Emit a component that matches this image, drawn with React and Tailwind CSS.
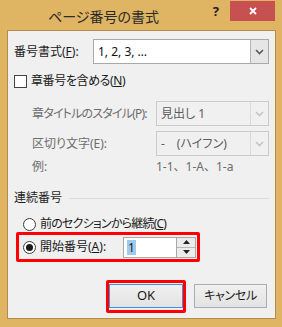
import React from 'react';

const Chevron = ({ color }) => (
  <svg width="9" height="6" viewBox="0 0 9 6">
    <polyline points="1,1 4.5,4.5 8,1" fill="none" stroke={color} strokeWidth="1.6" />
  </svg>
);

const Combo = ({ value, disabled, className }) => (
  <div
    className={`flex h-[25px] border ${
      disabled ? 'border-[#cacaca] bg-[#f0f0f0] text-[#5c5c5c]' : 'border-[#a9a9a9] bg-white text-[#111]'
    } ${className}`}
  >
    <div className="flex flex-1 items-center pl-[4px] whitespace-nowrap">{value}</div>
    <div
      className={`flex w-[18px] items-center justify-center border-l ${
        disabled ? 'border-[#dadada] bg-[#f0f0f0]' : 'border-[#b5b5b5] bg-[#e6e6e6]'
      }`}
    >
      <Chevron color={disabled ? '#c4c4c4' : '#5a5a5a'} />
    </div>
  </div>
);

const Radio = ({ checked }) => (
  <div className="flex h-[13px] w-[13px] shrink-0 items-center justify-center rounded-full border border-[#3c3c3c] bg-white">
    {checked && <div className="h-[7px] w-[7px] rounded-full bg-[#1a1a1a]" />}
  </div>
);

const Triangle = ({ up }) => (
  <svg width="7" height="4" viewBox="0 0 7 4">
    <polygon points={up ? '0,4 7,4 3.5,0' : '0,0 7,0 3.5,4'} fill="#222" />
  </svg>
);

export default function App() {
  return (
    <div className="h-[327px] w-[282px] bg-[#dfb463] font-['Noto_Sans','Noto_Sans_CJK_JP',sans-serif] text-[12px] text-[#1a1a1a] [font-feature-settings:'palt']">
      {/* title bar */}
      <div className="flex h-[30px] items-start">
        <span className="ml-[48px] mt-[7px] text-[14px] leading-[20px] text-[#2a2a2a]">ページ番号の書式</span>
        <span className="ml-auto mt-[3px] text-[13px] font-bold leading-[16px] text-[#222]">?</span>
        <div className="ml-[11px] mr-[7px] mt-[1px] flex h-[20px] w-[45px] items-center justify-center bg-[#c75050]">
          <svg width="8" height="8" viewBox="0 0 8 8">
            <path d="M1 1 L7 7 M7 1 L1 7" stroke="#fff" strokeWidth="1.8" />
          </svg>
        </div>
      </div>

      {/* dialog body */}
      <div className="ml-[7px] flex h-[289px] w-[269px] flex-col border border-[#b28d4c] bg-[#f0f0f0] pl-[6px] pr-[6px]">
        <div className="mt-[8px] flex items-center">
          <span className="w-[79px] shrink-0 whitespace-nowrap">
            番号書式(<span className="underline">F</span>):
          </span>
          <Combo value="1, 2, 3, …" className="flex-1" />
        </div>

        <div className="mt-[10px] flex h-[14px] items-center gap-[4px]">
          <div className="h-[13px] w-[13px] border border-[#444] bg-white" />
          <span className="tracking-[-0.4px]">
            章番号を含める(<span className="underline">N</span>)
          </span>
        </div>

        <div className="mt-[13px] flex items-center pl-[18px] text-[#6d6d6d]">
          <span className="w-[124px] shrink-0 whitespace-nowrap tracking-[-0.8px]">章タイトルのスタイル(P):</span>
          <Combo value="見出し 1" disabled className="flex-1" />
        </div>
        <div className="mt-[5px] flex items-center pl-[18px] text-[#6d6d6d]">
          <span className="w-[124px] shrink-0 whitespace-nowrap">区切り文字(E):</span>
          <Combo value="-　(ハイフン)" disabled className="flex-1" />
        </div>
        <div className="mt-[3px] flex h-[16px] items-center pl-[18px] text-[#6d6d6d]">
          <span className="w-[124px] shrink-0">例:</span>
          <span className="[font-feature-settings:normal]">1-1、1-A、1-a</span>
        </div>

        <div className="mt-[15px] flex h-[16px] items-center gap-[7px]">
          <span className="text-[#1e1e1e]">連続番号</span>
          <div className="h-px flex-1 bg-[#dcdcdc]" />
        </div>

        <div className="mt-[11px] flex h-[14px] items-center gap-[4px] pl-[9px]">
          <Radio />
          <span className="whitespace-nowrap tracking-[-0.8px]">
            前のセクションから継続(<span className="underline">C</span>)
          </span>
        </div>

        <div className="ml-[2px] mt-[1px] flex h-[30px] w-[184px] items-center rounded-[2px] border-[3px] border-[#ff0000] pl-[4px]">
          <Radio checked />
          <span className="ml-[4px] w-[83px] shrink-0 whitespace-nowrap">
            開始番号(<span className="underline">A</span>):
          </span>
          <div className="flex h-[21px]">
            <div className="flex w-[54px] items-center border border-[#a9a9a9] bg-white pl-[3px]">
              <span className="bg-[#9fcaf0] px-[1px] leading-[15px]">1</span>
            </div>
            <div className="flex w-[19px] flex-col border border-l-0 border-[#a9a9a9]">
              <div className="flex flex-1 items-center justify-center border-b border-[#b8b8b8] bg-[#ececec]">
                <Triangle up />
              </div>
              <div className="flex flex-1 items-center justify-center bg-[#ececec]">
                <Triangle />
              </div>
            </div>
          </div>
        </div>

        <div className="mt-[18px] flex items-start">
          <div className="ml-[92px] rounded-[2px] border-[3px] border-[#ff0000] pb-[2px] pt-[1px]">
            <div className="flex h-[24px] w-[74px] items-center justify-center border border-[#3c93e6] bg-gradient-to-b from-[#f0f0f0] to-[#e3e3e3] text-[13px]">
              OK
            </div>
          </div>
          <div className="ml-[8px] mt-[4px] flex h-[24px] w-[73px] items-center justify-center border border-[#acacac] bg-gradient-to-b from-[#f0f0f0] to-[#e3e3e3] tracking-[-0.3px]">
            キャンセル
          </div>
        </div>
      </div>
    </div>
  );
}
